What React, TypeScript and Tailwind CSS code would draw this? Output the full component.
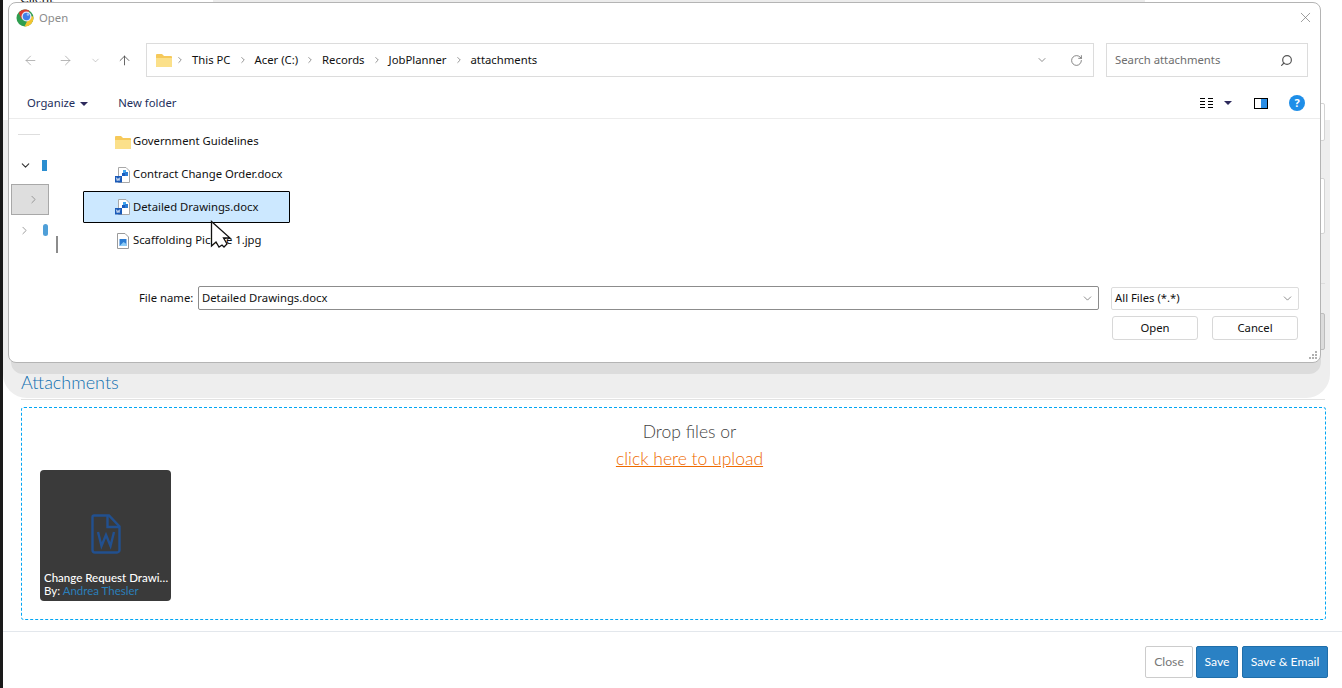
import React from 'react';
import { ArrowLeft, ArrowRight, ArrowUp, ChevronDown, ChevronRight, RotateCw, X, Search } from 'lucide-react';

const segoe = { fontFamily: '"Noto Sans", "Open Sans", sans-serif' };

const WordIcon = () => (
  <svg width="16" height="16" viewBox="0 0 16 16" className="shrink-0">
    <path d="M3.500 0.500H11L14.500 4V15.500H3.500Z" fill="#fff" stroke="#a8a8a8" />
    <rect x="8" y="3" width="3" height="3" fill="#41a5ee" />
    <rect x="10" y="5" width="3" height="4" fill="#2b7cd3" />
    <rect x="7" y="6" width="3" height="3" fill="#185abd" />
    <rect x="0" y="9" width="7" height="6.500" fill="#1a5ab8" />
    <path d="M1.300 10.500l.9 3.200.9-2.400.9 2.400.9-3.200" fill="none" stroke="#fff" strokeWidth="0.700" />
  </svg>
);

const PictureIcon = () => (
  <svg width="16" height="16" viewBox="0 0 16 16" className="shrink-0">
    <path d="M2.500 0.500H10L13.500 4V15.500H2.500Z" fill="#fff" stroke="#9a9a9a" />
    <rect x="4.500" y="6" width="7" height="7" fill="#2b7cd3" />
    <path d="M4.500 13l4-4 3 2v2Z" fill="#8ccbf5" />
  </svg>
);

const FolderIcon = () => (
  <svg width="16" height="14" viewBox="0 0 16 14" className="shrink-0">
    <path d="M0 2a1 1 0 0 1 1-1h5l2 2h7a1 1 0 0 1 1 1v9a1 1 0 0 1-1 1H1a1 1 0 0 1-1-1Z" fill="#f6c95a" />
    <path d="M0 5h16v8a1 1 0 0 1-1 1H1a1 1 0 0 1-1-1Z" fill="#fbe08a" />
  </svg>
);

const ChromeIcon = () => (
  <svg width="18" height="18" viewBox="0 0 18 18" className="shrink-0">
    <circle cx="9" cy="9" r="8.500" fill="#2f9e4f" />
    <path d="M2.800 3.900A8 8 0 0 1 9 .5c2 0 3.500.6 4.500 1.500L8 9.500 5.500 10Z" fill="#d93a30" />
    <path d="M17.300 7.500a8.500 8.500 0 0 1-8.800 10l3.700-7.500.8-3Z" fill="#f4c430" />
    <circle cx="10.500" cy="7.500" r="5" fill="#dfe9f8" />
    <circle cx="10.500" cy="7.500" r="3.700" fill="#3f7fe8" />
    <circle cx="12" cy="5.500" r="1.300" fill="#9cc1f5" />
  </svg>
);

const Cursor = () => (
  <svg width="24" height="32" viewBox="0 0 24 32" className="absolute left-[210px] top-[220px]">
    <path d="M1.500 1.500V26L6 22l3 5 3-2 2 2 3-3-3.500-6H20Z" fill="#fff" stroke="#111" strokeWidth="1.300" />
  </svg>
);

const FileRow = ({ icon, name, selected }: { icon: React.ReactNode; name: string; selected?: boolean }) => (
  <div
    className={`flex w-[207px] items-center gap-[2px] text-[11.300px] text-[#111] ${
      selected ? 'mb-px h-[32px] rounded-[1px] border border-black bg-[#cce8ff] pl-[31px]' : 'h-[33px] pl-[32px]'
    }`}
  >
    {icon}
    <span className="whitespace-nowrap">{name}</span>
  </div>
);

const Crumb = ({ label, first }: { label: string; first?: boolean }) => (
  <>
    <ChevronRight size={10} strokeWidth={1.500} className={`text-[#555] ${first ? 'ml-[3px] mr-[7px]' : 'mx-[7px]'}`} />
    <span>{label}</span>
  </>
);

const OpenDialog = () => (
  <div
    style={segoe}
    className="absolute left-[8px] top-[2px] flex h-[361px] w-[1313px] flex-col rounded-[8px] border border-[#b4b4b4] bg-white text-[#111]"
  >
    <div className="flex h-[29px] items-center pl-[7px] pr-[6px]">
      <ChromeIcon />
      <span className="ml-[5px] pt-[2px] text-[11.300px] text-[#8c8c8c]">Open</span>
      <X size={17} strokeWidth={1} className="ml-auto text-[#777]" />
    </div>

    <div className="mt-[11px] flex h-[34px] items-center pl-[14px] pr-[12px]">
      <ArrowLeft size={15} strokeWidth={1.200} className="text-[#a0a0a0]" />
      <ArrowRight size={15} strokeWidth={1.200} className="ml-[20px] text-[#a0a0a0]" />
      <ChevronDown size={11} strokeWidth={1.200} className="ml-[17px] text-[#a0a0a0]" />
      <ArrowUp size={15} strokeWidth={1.300} className="ml-[16px] text-[#444]" />
      <div className="ml-[14px] flex h-[34px] w-[948px] items-center border border-[#dcdcdc] pl-[9px] pr-[10px] text-[11.300px]">
        <FolderIcon />
        <Crumb label="This PC" first />
        <Crumb label="Acer (C:)" />
        <Crumb label="Records" />
        <Crumb label="JobPlanner" />
        <Crumb label="attachments" />
        <ChevronDown size={12} strokeWidth={1.200} className="ml-auto text-[#444]" />
        <RotateCw size={13} strokeWidth={1.300} className="ml-[22px] text-[#555]" />
      </div>
      <div className="ml-[12px] flex h-[34px] flex-1 items-center border border-[#dcdcdc] pl-[8px] pr-[14px] text-[11.300px] text-[#6e6e6e]">
        <span>Search attachments</span>
        <Search size={13} strokeWidth={2.200} className="ml-auto -scale-x-100 text-[#555]" />
      </div>
    </div>

    <div className="flex h-[42px] items-center border-b border-[#ececec] pl-[18px] pr-[15px] pt-[11px] text-[11.300px] text-[#1e2f5c]">
      <span>Organize</span>
      <span className="ml-[5px] mt-[1px] h-0 w-0 border-x-[4px] border-t-[4px] border-x-transparent border-t-[#2d2a5c]" />
      <span className="ml-[30px]">New folder</span>
      <div className="ml-auto flex items-center">
        <svg width="13" height="10" viewBox="0 0 13 10" className="text-black">
          <path d="M0 .5h5M0 3.500h5M0 6.500h5M0 9.500h5M8 .5h5M8 3.500h5M8 6.500h5M8 9.500h5" stroke="currentColor" />
        </svg>
        <span className="ml-[11px] h-0 w-0 border-x-[4px] border-t-[4px] border-x-transparent border-t-[#2d2a5c]" />
        <span className="ml-[22px] flex h-[11px] w-[14px] justify-end border border-black">
          <span className="w-[6px] bg-[#2b8ee6]" />
        </span>
        <span className="ml-[21px] flex h-[16px] w-[16px] items-center justify-center rounded-full bg-[#1e8ee8] text-[11px] font-bold text-white">
          ?
        </span>
      </div>
    </div>

    <div className="flex h-[167px]">
      <div className="w-[74px] shrink-0 pt-[15px]">
        <div className="ml-[9px] h-px w-[22px] bg-[#dedede]" />
        <div className="mt-[25px] flex h-[10px] items-center pl-[10px]">
          <ChevronDown size={13} strokeWidth={2} className="text-[#333]" />
          <span className="ml-[10px] h-[11px] w-[5px] bg-[#2b8ed0]" />
        </div>
        <div className="ml-[2px] mt-[14px] flex h-[31px] w-[38px] items-center border border-[#a8a8a8] bg-[#dedede] pl-[15px]">
          <ChevronRight size={13} strokeWidth={1.500} className="text-[#888]" />
        </div>
        <div className="mt-[10px] flex h-[10px] items-center pl-[9px]">
          <ChevronRight size={13} strokeWidth={1.500} className="text-[#888]" />
          <span className="ml-[12px] h-[12px] w-[5px] rounded-sm bg-[#4f9fd8]" />
        </div>
        <div className="ml-[47px] mt-[1px] h-[17px] w-[2px] bg-[#8c8c8c]" />
      </div>
      <div className="flex flex-col pt-[6px]">
        <FileRow icon={<FolderIcon />} name="Government Guidelines" />
        <FileRow icon={<WordIcon />} name="Contract Change Order.docx" />
        <FileRow icon={<WordIcon />} name="Detailed Drawings.docx" selected />
        <FileRow icon={<PictureIcon />} name="Scaffolding Picture 1.jpg" />
      </div>
    </div>

    <div className="flex h-[24px] items-center text-[11.300px]">
      <span className="ml-[130px] w-[59px] whitespace-nowrap">File name:</span>
      <div className="flex h-[24px] w-[901px] items-center rounded-[2px] border border-[#8c8c8c] pl-[3px] pr-[4px]">
        <span>Detailed Drawings.docx</span>
        <ChevronDown size={13} strokeWidth={1.100} className="ml-auto text-[#444]" />
      </div>
      <div className="ml-[12px] flex h-[23px] w-[188px] items-center rounded-[2px] border border-[#dcdcdc] pl-[3px] pr-[4px]">
        <span>All Files (*.*)</span>
        <ChevronDown size={13} strokeWidth={1.100} className="ml-auto text-[#444]" />
      </div>
    </div>

    <div className="mt-[6px] flex justify-end gap-[14px] pr-[22px] text-[11.300px]">
      <button className="h-[24px] w-[86px] rounded-[3px] border border-[#d8d8d8]">Open</button>
      <button className="h-[24px] w-[86px] rounded-[3px] border border-[#d8d8d8]">Cancel</button>
    </div>

    <svg width="8" height="8" viewBox="0 0 8 8" className="absolute bottom-[3px] right-[3px] text-[#b0b0b0]">
      <path d="M6 0h2v2H6zM3 3h2v2H3zM6 3h2v2H6zM0 6h2v2H0zM3 6h2v2H3zM6 6h2v2H6z" fill="currentColor" />
    </svg>
  </div>
);

// bits of the form that stick out to the right of the dialog
const FormScraps = () => (
  <div className="absolute left-[1307px] top-[103px] flex w-[15px] flex-col">
    <div className="h-[38px] rounded-[2px] border border-[#d4d4d4] bg-white" />
    <div className="mt-[37px] h-[56px] rounded-[2px] border border-[#d4d4d4] bg-white" />
    <div className="mt-[49px] h-px bg-[#dddddd]" />
    <div className="mt-[29px] h-[37px] rounded-[2px] border border-[#bdbdbd] bg-[#dcdcdc]" />
  </div>
);

export default function App() {
  return (
    <div className="relative flex h-[688px] w-[1342px] overflow-hidden bg-white" style={{ fontFamily: 'Lato, sans-serif' }}>
      <div className="w-[3px] shrink-0 bg-[#1a1a1a]" />

      <div className="relative flex flex-1 flex-col">
        <div className="absolute left-[210px] top-0 h-[2px] w-[932px] bg-[#ececec]" />
        <div className="absolute left-0 right-[12px] top-[120px] h-[278px] rounded-b-[24px] bg-[#eeeeee]" />
        <div className="absolute left-[8px] top-[340px] h-[34px] w-[1310px] rounded-b-[12px] bg-[#dcdcdc]" />
        <FormScraps />

        <h3 className="relative ml-[18px] mt-[370px] text-[18px] font-light leading-[24px] text-[#0f6fb0]">Attachments</h3>
        <div className="relative ml-[18px] mr-[17px] mt-[5px] h-px bg-[#e2e2e2]" />

        <div className="relative ml-[18px] mr-[16px] mt-[7px] h-[213px] rounded-[3px] border-[1px] border-dashed border-sky-500">
          <div className="pl-[32px] pt-[10px] text-center text-[17.500px] font-light leading-[27px] text-[#444]">
            <div>Drop files or</div>
            <a className="text-[#ee6a00] underline">click here to upload</a>
          </div>
          <div className="ml-[18px] mt-[-2px] flex h-[131px] w-[131px] flex-col rounded-[4px] bg-[#3a3a3a] pb-[4px] pl-[4px] pr-[2px] text-[11.500px] leading-[13px] text-white">
            <div className="flex flex-1 items-center justify-center pr-[2px] pt-[26px]">
              <svg width="30" height="40" viewBox="0 0 30 40" fill="none" stroke="#22508f" strokeWidth="2.400">
                <path d="M3 1.500h15l10.500 11V36a2.500 2.500 0 0 1-2.500 2.500H4A2.500 2.500 0 0 1 1.500 36V3A1.500 1.500 0 0 1 3 1.500Z" />
                <path d="M16.500 1.500V13h12" />
                <path d="M7 18l3.500 14 4.500-11 4.500 11L23 18" />
              </svg>
            </div>
            <div className="truncate font-medium">Change Request Drawing.docx</div>
            <div>
              By: <span className="text-[#2a7fba]">Andrea Thesler</span>
            </div>
          </div>
        </div>

        <div className="relative mt-[11px] h-px bg-[#e3e7ec]" />

        <div className="mr-[14px] mt-[14px] flex justify-end text-[12.200px]">
          <button className="h-[32px] w-[48px] rounded-[2px] border border-[#cccccc] bg-white text-[#777]">Close</button>
          <button className="ml-[3px] h-[32px] w-[42px] rounded-[2px] border border-[#1f6ea9] bg-[#2a81c4] text-white">Save</button>
          <button className="ml-[4px] h-[32px] w-[86px] rounded-[2px] border border-[#1f6ea9] bg-[#2a81c4] text-white">Save &amp; Email</button>
        </div>
      </div>

      <div className="absolute left-[20px] top-[-9px] text-[13px] leading-[14px] text-[#222]">Client</div>
      <OpenDialog />
      <Cursor />
    </div>
  );
}
